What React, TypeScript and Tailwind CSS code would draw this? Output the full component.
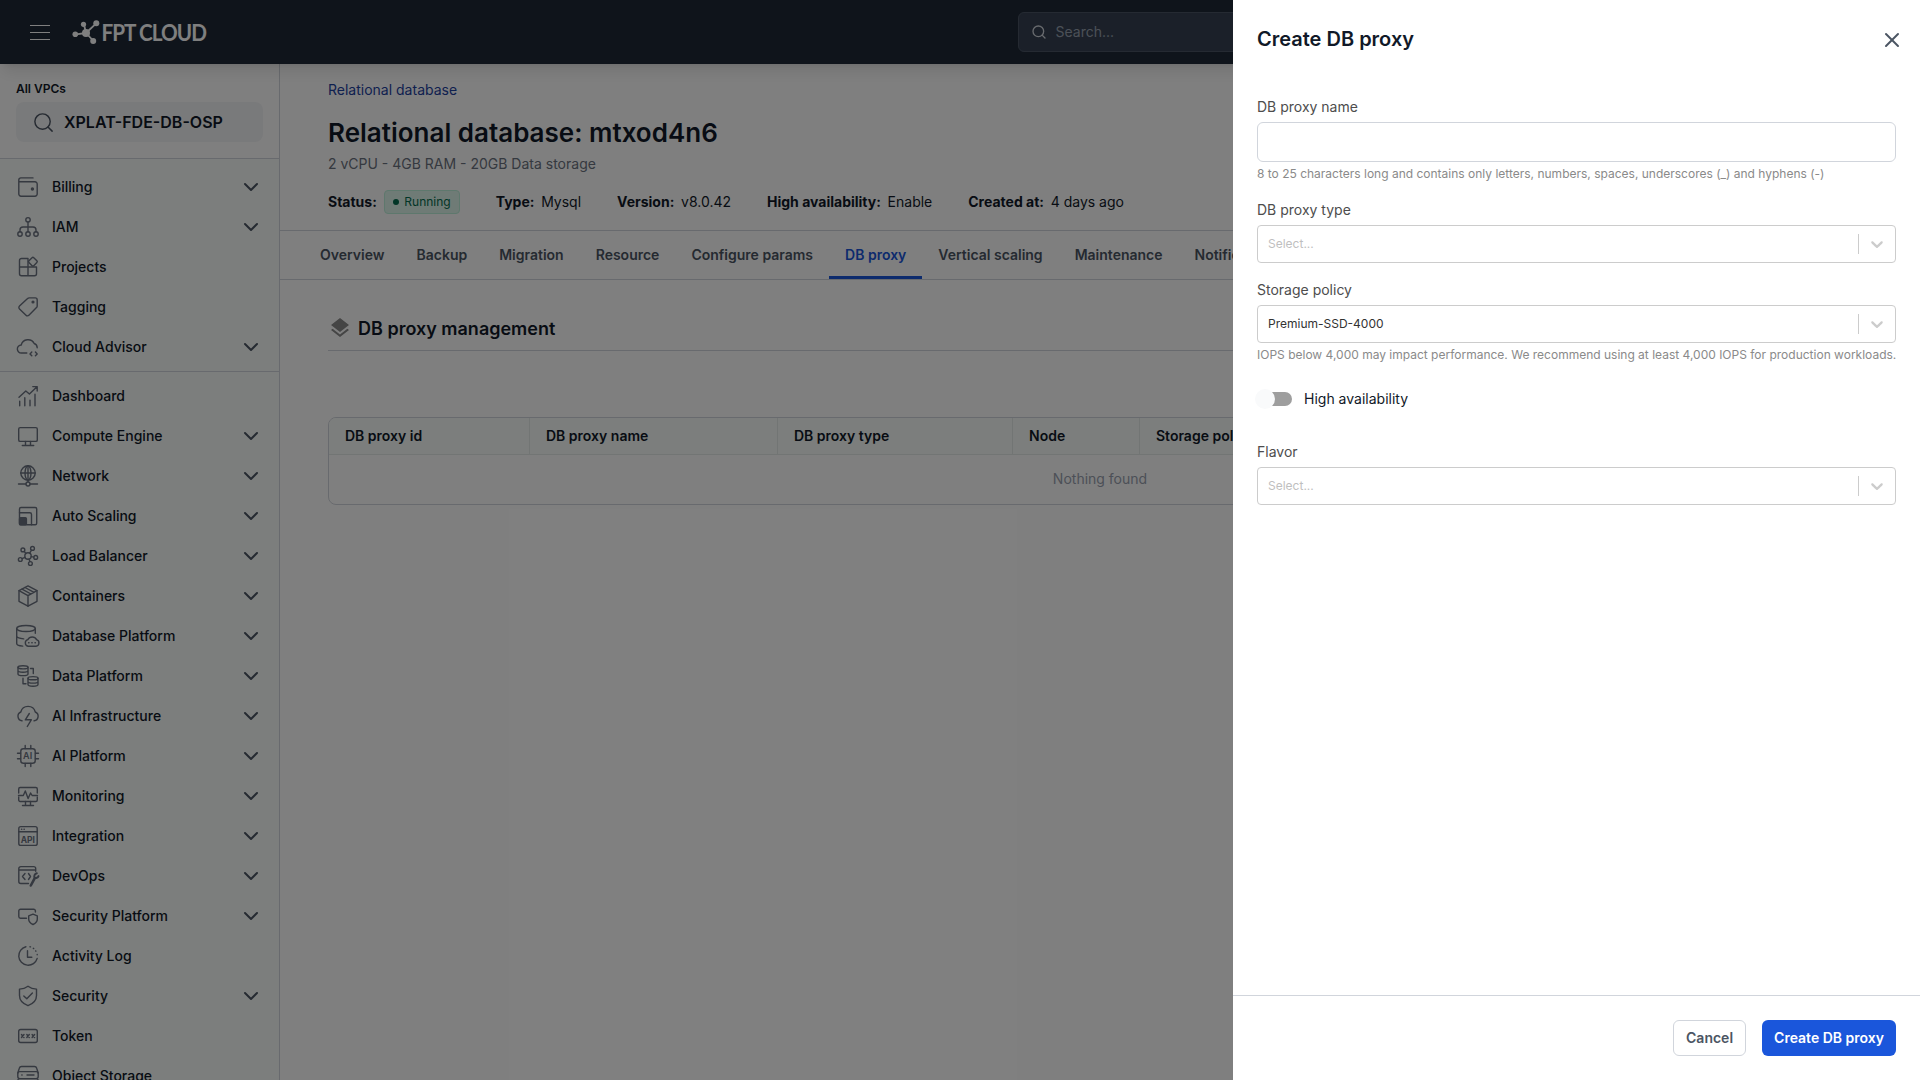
import type { ReactNode } from "react";
import { ChevronDown, Search, X } from "lucide-react";

type NavEntry = {
  label: string;
  icon: ReactNode;
  expandable?: boolean;
};

const accountNav: NavEntry[] = [
  {
    label: "Billing",
    expandable: true,
    icon: (
      <>
        <path d="M17 2.9H4.8A2 2 0 0 0 2.8 4.9V19a2.2 2.2 0 0 0 2.2 2.2h14a2.2 2.2 0 0 0 2.2-2.2V9A2.2 2.2 0 0 0 19 6.8H3" />
        <circle cx="16.4" cy="14" r="1" fill="currentColor" />
      </>
    ),
  },
  {
    label: "IAM",
    expandable: true,
    icon: (
      <>
        <circle cx="12" cy="4.8" r="2.2" />
        <path d="M12 7v9.8M4 16.8V15c0-2 1-3 3-3h10c2 0 3 1 3 3v1.8" />
        <circle cx="4" cy="19" r="2.2" />
        <circle cx="12" cy="19" r="2.2" />
        <circle cx="20" cy="19" r="2.2" />
      </>
    ),
  },
  {
    label: "Projects",
    icon: (
      <>
        <path d="M12 12H3.5V5.5a2 2 0 0 1 2-2H12zM12 12H3.5v6.7a2 2 0 0 0 2 2H12zM12 12h8.5v6.7a2 2 0 0 1-2 2H12z" />
        <rect x="13.5" y="3.3" width="6.8" height="6.8" rx="1.2" transform="rotate(45 16.9 6.7)" />
      </>
    ),
  },
  {
    label: "Tagging",
    icon: (
      <>
        <path d="M13.2 2.9h6a2 2 0 0 1 2 2v6c0 .7-.2 1.2-.7 1.7l-7.6 7.7a2 2 0 0 1-2.9 0L3.5 14a2 2 0 0 1 0-2.9l8.1-7.5c.5-.5 1-.7 1.6-.7z" />
        <circle cx="17" cy="7" r=".9" fill="currentColor" />
      </>
    ),
  },
  {
    label: "Cloud Advisor",
    expandable: true,
    icon: (
      <path d="M10.8 18H5.5a4 4 0 0 1-.3-8 7 7 0 0 1 13-1.5 4.6 4.6 0 0 1 3 4.2M15.8 17l-1.8 1.9 1.8 1.9M19.4 17l1.8 1.9-1.8 1.9" />
    ),
  },
];

const serviceNav: NavEntry[] = [
  {
    label: "Dashboard",
    icon: <path d="M3 13.3l6.8-6.3 3.6 3 7.6-7.3M16.8 2.6h4.4V7M3.7 17.3v4.5M8.8 13.8v8M14 16.3v5.5M19 10.3v11.5" />,
  },
  {
    label: "Compute Engine",
    expandable: true,
    icon: (
      <>
        <rect x="2.7" y="3.6" width="18.6" height="13.8" rx="1.5" />
        <path d="M9.5 17.4v4M14.5 17.4v4M6.3 21.5h11.4" />
      </>
    ),
  },
  {
    label: "Network",
    expandable: true,
    icon: (
      <>
        <circle cx="12" cy="9" r="7.2" />
        <ellipse cx="12" cy="9" rx="3" ry="7.2" />
        <path d="M4.8 9h14.4M12 1.8v16M2.5 20h7.3M14.2 20h7.3" />
        <circle cx="12" cy="20" r="2" />
      </>
    ),
  },
  {
    label: "Auto Scaling",
    expandable: true,
    icon: (
      <>
        <rect x="3.5" y="3.5" width="17.2" height="17.2" rx="1.5" />
        <path d="M3.5 8.7h10.3c1 0 1.7.7 1.7 1.7v10.3" />
        <rect x="3.5" y="13.8" width="6.9" height="6.9" rx="1" fill="currentColor" />
      </>
    ),
  },
  {
    label: "Load Balancer",
    expandable: true,
    icon: (
      <>
        <circle cx="12" cy="12" r="3.2" />
        <circle cx="6.9" cy="5.9" r="1.9" />
        <circle cx="16.5" cy="4.4" r="1.9" />
        <circle cx="19.7" cy="13.4" r="1.9" />
        <circle cx="14.4" cy="19.5" r="1.9" />
        <circle cx="4.3" cy="15.5" r="1.9" />
        <path d="M8.2 7.4l1.7 2.1M15.6 6.2l-2 3M17.8 13.1l-2.6-.5M13.9 17.6l-.8-2.5M6 14.6l3-1.3" />
      </>
    ),
  },
  {
    label: "Containers",
    expandable: true,
    icon: (
      <>
        <path d="M12 1.9l9 4.8v10.6l-9 4.9-9-4.9V6.7z" />
        <path d="M3 6.7l9 4.9 9-4.9M12 11.6v10.6M6 5.2l9 4.8M9 3.5l9 4.8" />
      </>
    ),
  },
  {
    label: "Database Platform",
    expandable: true,
    icon: (
      <>
        <ellipse cx="10" cy="4.5" rx="9.3" ry="3" />
        <path d="M.7 4.5v15c0 1.3 2.5 2.3 6 2.6M.7 12c0 1.4 2.8 2.5 7 2.9M19.3 4.5v4.8" />
        <path d="M12 22.3a3.4 3.4 0 0 1-.2-6.6 5 5 0 0 1 8.8 0 3.4 3.4 0 0 1-.6 6.6z" />
        <path d="M12.6 18.7h.4M15.8 18.7h.4M19 18.7h.4" />
      </>
    ),
  },
  {
    label: "Data Platform",
    expandable: true,
    icon: (
      <>
        <ellipse cx="7" cy="3.3" rx="5" ry="1.6" />
        <path d="M2 3.3v6.6c0 .9 2.2 1.7 5 1.7s5-.8 5-1.7V3.3M2 6.6c0 .9 2.2 1.7 5 1.7s5-.8 5-1.7" />
        <ellipse cx="17" cy="14.2" rx="5" ry="1.6" />
        <path d="M12 14.2v6.3c0 .9 2.2 1.7 5 1.7s5-.8 5-1.7v-6.3M12 17.4c0 .9 2.2 1.7 5 1.7s5-.8 5-1.7M14.5 4.5h2.8v5M10 19.8H7v-5.5" />
      </>
    ),
  },
  {
    label: "AI Infrastructure",
    expandable: true,
    icon: (
      <>
        <path d="M6 16.8A4.6 4.6 0 0 1 4.8 8a7.5 7.5 0 0 1 14.5 0 4.6 4.6 0 0 1-1.2 8.8" />
        <path d="M13.3 9.5l-4 6.3h6l-4 6.7" />
      </>
    ),
  },
  {
    label: "AI Platform",
    expandable: true,
    icon: (
      <>
        <rect x="4.8" y="4.8" width="14.4" height="14.4" rx="2.5" />
        <path d="M9.2 1.5v3M14.8 1.5v3M9.2 19.5v3M14.8 19.5v3M1.5 9.2h3M1.5 14.8h3M19.5 9.2h3M19.5 14.8h3" />
        <text x="7.1" y="15.3" className="fill-current stroke-none text-[9px] font-semibold">
          AI
        </text>
      </>
    ),
  },
  {
    label: "Monitoring",
    expandable: true,
    icon: (
      <>
        <path d="M2.7 9V5a1.5 1.5 0 0 1 1.5-1.5h15.6A1.5 1.5 0 0 1 21.3 5v4M2.7 13v3a1.5 1.5 0 0 0 1.5 1.5h15.6a1.5 1.5 0 0 0 1.5-1.5v-3" />
        <path d="M2.5 11.5h4.8l2-4.5 2.8 7.5 2.5-5.5 1.5 2.5h5.4M9.5 17.5v4M14.5 17.5v4M6.5 21.5h11" />
      </>
    ),
  },
  {
    label: "Integration",
    expandable: true,
    icon: (
      <>
        <rect x="2.8" y="2.6" width="18.4" height="18.8" rx="2" />
        <path d="M2.8 7.8h18.4M5.5 5.2h.3M8 5.2h.3" />
        <text x="4.7" y="18.8" className="fill-current stroke-none text-[8.5px] font-bold">
          API
        </text>
      </>
    ),
  },
  {
    label: "DevOps",
    expandable: true,
    icon: (
      <>
        <path d="M12.5 19.5H4.8a2 2 0 0 1-2-2V4.6a2 2 0 0 1 2-2h12.9a2 2 0 0 1 2 2v2.6M2.8 6h16.9" />
        <path d="M9 9.5l-2.5 3L9 15.5M12.5 9.5l2 3-2 3" />
        <path d="M14.8 21.5l3.7-6.8" strokeWidth="2.6" />
        <path d="M20.8 9.3c-2 .5-3 2.3-2.3 4.3 1.5.8 3.3.2 4-1.5" strokeWidth="2" />
      </>
    ),
  },
  {
    label: "Security Platform",
    expandable: true,
    icon: (
      <>
        <path d="M10.5 14.3H4.5a1.7 1.7 0 0 1-1.7-1.7V7a1.7 1.7 0 0 1 1.7-1.7h13.2A1.7 1.7 0 0 1 19.4 7v1" />
        <path d="M17 10.2l4.3 1.6v3.5c0 2.3-1.6 4-4.3 5.2-2.7-1.2-4.3-2.9-4.3-5.2v-3.5z" />
      </>
    ),
  },
  {
    label: "Activity Log",
    icon: (
      <>
        <path d="M9.9 2.7A9.4 9.4 0 1 0 21.2 14.4" />
        <path d="M14 2.8l.5.1M17.3 4.3l.4.3M19.7 6.9l.2.3M21.2 10.4v.3M11.5 6.8v6.4h4.3" />
      </>
    ),
  },
  {
    label: "Security",
    expandable: true,
    icon: (
      <>
        <path d="M12 2.3c2.4 1.9 5.2 2.7 8.5 2.8v6.5c0 4.7-2.8 8-8.5 10.1-5.7-2.1-8.5-5.4-8.5-10.1V5.1C6.8 5 9.6 4.2 12 2.3z" />
        <path d="M7.8 12l3 2.8 5.6-5.8" />
      </>
    ),
  },
  {
    label: "Token",
    icon: (
      <>
        <rect x="2.7" y="5.5" width="18.6" height="13" rx="2" />
        <path d="M5.5 10.5l2.5 3M8 10.5l-2.5 3M10.8 10.5l2.5 3M13.3 10.5l-2.5 3M16.1 10.5l2.5 3M18.6 10.5l-2.5 3" />
      </>
    ),
  },
  {
    label: "Object Storage",
    icon: (
      <>
        <path d="M1.8 9L3.3 4.3A2.5 2.5 0 0 1 5.6 2.5h12.8a2.5 2.5 0 0 1 2.3 1.8L22.2 9" />
        <rect x="1.8" y="7.6" width="20.4" height="7" rx="2" />
        <rect x="1.8" y="14.6" width="20.4" height="7" rx="2" />
        <path d="M5.8 11h.3M11 11h7M5.8 18h.3M11 18h7" />
      </>
    ),
  },
];

const tabs = [
  "Overview",
  "Backup",
  "Migration",
  "Resource",
  "Configure params",
  "DB proxy",
  "Vertical scaling",
  "Maintenance",
  "Notification",
];

const columns = [
  { label: "DB proxy id", width: "w-[201px]" },
  { label: "DB proxy name", width: "w-[248px]" },
  { label: "DB proxy type", width: "w-[235px]" },
  { label: "Node", width: "w-[127px]" },
  { label: "Storage policy", width: "flex-1" },
];

function NavRow({ label, icon, expandable }: NavEntry) {
  return (
    <a className="flex h-10 shrink-0 items-center pl-4 text-[#111928]">
      <svg
        viewBox="0 0 24 24"
        className="mr-3 h-6 w-6 shrink-0 text-[#6b7280]"
        fill="none"
        stroke="currentColor"
        strokeWidth="1.4"
        strokeLinecap="round"
        strokeLinejoin="round"
      >
        {icon}
      </svg>
      <span className="flex-1 text-sm font-medium">{label}</span>
      {expandable && <ChevronDown className="mr-4 h-6 w-6 text-[#4b5563]" />}
    </a>
  );
}

function Logo() {
  return (
    <svg viewBox="0 0 136 26" className="h-[26px] w-[136px] text-white" fill="currentColor">
      <path
        d="M14 14L4 15.3M14 14L12 5.5M14 14L24.5 4.2M14 14l7.5 8"
        stroke="currentColor"
        strokeWidth="1.8"
      />
      <circle cx="3.3" cy="15.3" r="2.8" />
      <circle cx="11.5" cy="5.3" r="2.6" />
      <circle cx="24.3" cy="4.2" r="3" />
      <circle cx="21.2" cy="22" r="3" />
      <circle cx="14" cy="14" r="4" />
      <text
        x="29.5"
        y="22.4"
        textLength="104.5"
        lengthAdjust="spacingAndGlyphs"
        className="font-['Lato',sans-serif] text-[22px] font-bold tracking-[-1px]"
      >
        FPT CLOUD
      </text>
    </svg>
  );
}

function Sidebar() {
  return (
    <aside className="flex w-[280px] shrink-0 flex-col overflow-hidden border-r border-gray-300 bg-[#f8fcfa]">
      <div className="h-[95px] shrink-0 border-b border-gray-300 bg-white px-4 pt-4">
        <p className="text-xs leading-[18px] font-semibold text-[#111928]">All VPCs</p>
        <div className="mt-1 flex h-10 w-[247px] items-center gap-3 rounded-lg bg-gray-100 pl-4">
          <Search className="h-[23px] w-[23px] text-[#4b5563]" strokeWidth={1.5} />
          <span className="-ml-[3px] text-base font-semibold text-[#111928]">XPLAT-FDE-DB-OSP</span>
        </div>
      </div>
      <nav className="flex flex-col border-b border-gray-300 pt-2 pb-1">
        {accountNav.map((entry) => (
          <NavRow key={entry.label} {...entry} />
        ))}
      </nav>
      <nav className="flex flex-col pt-1">
        {serviceNav.map((entry) => (
          <NavRow key={entry.label} {...entry} />
        ))}
      </nav>
    </aside>
  );
}

function Meta({ label, children }: { label: string; children: ReactNode }) {
  return (
    <div className="flex items-center gap-[6.7px]">
      <span className="font-bold">{label}</span>
      {children}
    </div>
  );
}

function Field({ label, hint, children }: { label: string; hint?: string; children: ReactNode }) {
  return (
    <div>
      <label className="mb-[5px] block text-sm leading-5 text-[#4d4d4d]">{label}</label>
      {children}
      {hint && <p className="mt-1 text-xs leading-4 whitespace-nowrap text-[#8a8a8a]">{hint}</p>}
    </div>
  );
}

function Select({ value }: { value?: string }) {
  return (
    <div className="flex h-[38px] items-center rounded border border-[#cccccc] bg-white">
      <span className={value ? "flex-1 pl-[10px] text-xs text-[#333333]" : "flex-1 pl-[10px] text-xs text-[#bfbfbf]"}>
        {value ?? "Select..."}
      </span>
      <span className="h-5 w-px bg-[#cccccc]" />
      <svg viewBox="0 0 20 20" className="mx-2 h-5 w-5 fill-[#cccccc]">
        <path d="M4.516 7.548c0.436-0.446 1.043-0.481 1.576 0l3.908 3.747 3.908-3.747c0.533-0.481 1.141-0.446 1.574 0 0.436 0.445 0.408 1.197 0 1.615-0.406 0.418-4.695 4.502-4.695 4.502-0.217 0.223-0.502 0.335-0.787 0.335s-0.57-0.112-0.789-0.335c0 0-4.287-4.084-4.695-4.502s-0.436-1.17 0-1.615z" />
      </svg>
    </div>
  );
}

function DatabasePage() {
  return (
    <main className="min-w-0 flex-1 bg-white">
      <div className="h-[167px] border-b border-gray-300 px-12 pt-4 text-sm text-[#111928]">
        <a className="block leading-5 text-[#1e429f]">Relational database</a>
        <h1 className="mt-[15px] text-[26px] leading-9 font-semibold">Relational database: mtxod4n6</h1>
        <p className="mt-[3px] leading-5 text-[#6b7280]">2 vCPU - 4GB RAM - 20GB Data storage</p>
        <div className="mt-4 flex h-6 items-center gap-9">
          <Meta label="Status:">
            <span className="flex h-6 items-center gap-[5.8px] rounded border border-[#bcf0da] bg-[#def7ec] px-2 text-xs text-[#046c4e]">
              <span className="h-[6px] w-[6px] rounded-full bg-[#046c4e]" />
              Running
            </span>
          </Meta>
          <Meta label="Type:">Mysql</Meta>
          <Meta label="Version:">v8.0.42</Meta>
          <Meta label="High availability:">Enable</Meta>
          <Meta label="Created at:">4 days ago</Meta>
        </div>
      </div>

      <div className="flex h-[49px] border-b border-gray-300 pl-6">
        {tabs.map((tab) => (
          <span
            key={tab}
            className={
              tab === "DB proxy"
                ? "flex items-center border-b-[3px] border-[#1a56db] px-4 pt-[3px] text-sm font-semibold text-[#1a56db]"
                : "flex items-center px-4 text-sm font-semibold text-[#4b5563]"
            }
          >
            {tab}
          </span>
        ))}
      </div>

      <section className="px-12 pt-9">
        <div className="flex h-[35px] items-start gap-[6px] border-b border-gray-300">
          <svg viewBox="0 0 24 24" className="h-6 w-6 fill-[#8a8a8a]">
            <path d="M11.99 18.54l-7.37-5.73L3 14.07l9 7 9-7-1.63-1.27-7.38 5.74zM12 16l7.36-5.73L21 9l-9-7-9 7 1.63 1.27L12 16z" />
          </svg>
          <h2 className="text-lg leading-[26px] font-semibold text-[#111928]">DB proxy management</h2>
        </div>

        <div className="mt-[66px] overflow-hidden rounded-lg border border-gray-300">
          <div className="flex h-[37px] border-b border-[#e5eae8] bg-[#f8fcfa]">
            {columns.map((col) => (
              <div
                key={col.label}
                className={`flex shrink-0 items-center border-r border-[#e5eae8] px-4 text-sm font-semibold text-[#111928] ${col.width}`}
              >
                {col.label}
              </div>
            ))}
          </div>
          <div className="flex h-[49px] items-center justify-center pb-px text-sm text-gray-400">Nothing found</div>
        </div>
      </section>
    </main>
  );
}

function CreateProxyDrawer() {
  return (
    <div className="absolute inset-y-0 right-0 flex w-[687px] flex-col bg-white">
      <div className="flex h-20 shrink-0 items-center justify-between pr-4 pl-6">
        <h2 className="pb-[2px] text-xl font-semibold text-[#111928]">Create DB proxy</h2>
        <X className="h-6 w-6 text-[#4b5563]" />
      </div>
      <div className="flex flex-1 flex-col px-6 pt-[17px]">
        <Field
          label="DB proxy name"
          hint="8 to 25 characters long and contains only letters, numbers, spaces, underscores (_) and hyphens (-)"
        >
          <input className="block h-10 w-full rounded-md border border-gray-300 px-3 text-sm outline-none" />
        </Field>
        <div className="mt-[18px]">
          <Field label="DB proxy type">
            <Select />
          </Field>
        </div>
        <div className="mt-[17px]">
          <Field
            label="Storage policy"
            hint="IOPS below 4,000 may impact performance. We recommend using at least 4,000 IOPS for production workloads."
          >
            <Select value="Premium-SSD-4000" />
          </Field>
        </div>
        <div className="mt-[26px] flex h-5 items-center">
          <span className="flex h-[14px] w-[35px] items-center rounded-full bg-[#9e9e9e]">
            <span className="-ml-[2px] h-5 w-5 shrink-0 rounded-full bg-gray-50" />
          </span>
          <span className="ml-3 text-sm text-[#111928]">High availability</span>
        </div>
        <div className="mt-[33px]">
          <Field label="Flavor">
            <Select />
          </Field>
        </div>
      </div>
      <div className="flex h-[85px] shrink-0 justify-end gap-4 border-t border-gray-300 px-6 pt-6 text-sm font-semibold">
        <button className="h-9 rounded-md border border-gray-300 px-3 text-[#4b5563]">Cancel</button>
        <button className="h-9 rounded-md bg-[#1a56db] px-3 text-white">Create DB proxy</button>
      </div>
    </div>
  );
}

export default function App() {
  return (
    <div className="relative flex h-screen flex-col overflow-hidden bg-white font-['Inter',sans-serif]">
      <header className="z-10 flex h-16 shrink-0 items-center bg-[#1f2937] shadow-lg">
        <div className="ml-[30px] flex h-[15px] w-5 flex-col justify-between">
          <span className="h-px bg-white" />
          <span className="h-px bg-white" />
          <span className="h-px bg-white" />
        </div>
        <div className="ml-[22px]">
          <Logo />
        </div>
        <div className="mr-[462px] ml-auto flex h-10 w-[440px] items-center gap-[8.5px] rounded-md border border-gray-600 bg-gray-700 pl-3 text-sm text-gray-400">
          <Search className="h-4 w-4 text-gray-300" />
          Search...
        </div>
      </header>
      <div className="flex min-h-0 flex-1">
        <Sidebar />
        <DatabasePage />
      </div>
      <div className="absolute inset-0 z-20 bg-black/50">
        <CreateProxyDrawer />
      </div>
    </div>
  );
}
